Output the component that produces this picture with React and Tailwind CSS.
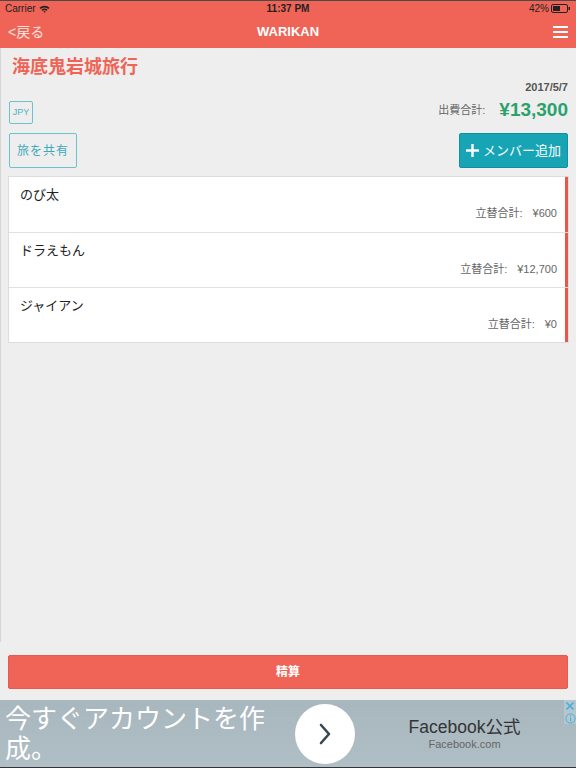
import React from "react";

const font = { fontFamily: '"Liberation Sans", "Noto Sans CJK JP", sans-serif' };

function Wifi() {
  return (
    <svg width="11" height="8" viewBox="0 0 11 8" className="ml-[3px]">
      <path d="M0.5 2.8 A7 7 0 0 1 10.5 2.8 L9.3 4 A5.3 5.3 0 0 0 1.7 4 Z" fill="#222" />
      <path d="M2.5 4.8 A4.2 4.2 0 0 1 8.5 4.8 L7.3 6 A2.5 2.5 0 0 0 3.7 6 Z" fill="#222" />
      <path d="M4.4 6.7 A1.5 1.5 0 0 1 6.6 6.7 L5.5 7.8 Z" fill="#222" />
    </svg>
  );
}

function Battery() {
  return (
    <svg width="20" height="9" viewBox="0 0 20 9" className="ml-[2px]">
      <rect x="0.5" y="0.5" width="16" height="8" rx="1.5" fill="none" stroke="#222" strokeWidth="1" />
      <rect x="2" y="2" width="7" height="5" fill="#222" />
      <rect x="17.5" y="3" width="1.5" height="3" fill="#222" />
    </svg>
  );
}

const members = [
  { name: "のび太", amount: "¥600" },
  { name: "ドラえもん", amount: "¥12,700" },
  { name: "ジャイアン", amount: "¥0" },
];

export default function App() {
  return (
    <div className="w-[576px] h-[768px] flex flex-col overflow-hidden bg-[#eeeeee]" style={font}>
      <div className="border-t border-[#4a4a4a] bg-[#ef6457]">
        <div className="h-[15px] flex items-center justify-between px-[5px] text-[10px] text-[#222]">
          <div className="flex items-center w-[100px]">
            <span>Carrier</span>
            <Wifi />
          </div>
          <span className="font-bold">11:37 PM</span>
          <div className="flex items-center justify-end w-[100px]">
            <span>42%</span>
            <Battery />
          </div>
        </div>
        <div className="h-[32px] flex items-center justify-between pl-[8px] pr-[8px] text-white">
          <span className="text-[14px] w-[100px] text-[#fde3df]">&lt;戻る</span>
          <span className="text-[13px] font-bold">WARIKAN</span>
          <div className="w-[100px] flex justify-end">
            <div className="flex flex-col gap-[3px] w-[15px]">
              <div className="h-[2px] bg-white" />
              <div className="h-[2px] bg-white" />
              <div className="h-[2px] bg-white" />
            </div>
          </div>
        </div>
      </div>

      <div className="flex-1 border-l border-[#d6d6d6] flex flex-col px-[7px]">
        <div className="pl-[4px] pt-[8px] text-[18px] font-bold text-[#ef6457] leading-[22px]">海底鬼岩城旅行</div>
        <div className="text-right text-[11px] font-bold text-[#555] mt-[2px] pr-px leading-[14px]">2017/5/7</div>
        <div className="flex items-end justify-between mt-[5px] pl-px pr-px">
          <div className="w-[24px] h-[23px] border border-[#6cc3cf] rounded-[2px] flex items-center justify-center text-[9px] text-[#4ab4c4]">JPY</div>
          <div className="flex items-center mb-[3px]">
            <span className="text-[11px] text-[#666] mr-[14px]">出費合計:</span>
            <span className="text-[19px] font-bold text-[#2aa26b] leading-[22px]">¥13,300</span>
          </div>
        </div>
        <div className="flex justify-between mt-[9px] pl-px pr-px">
          <div className="w-[68px] h-[35px] border border-[#6cc3cf] rounded-[2px] flex items-center justify-center text-[12px] text-[#3fa9b9] tracking-[1px]">旅を共有</div>
          <div className="w-[109px] h-[35px] bg-[#17a5b5] border border-[#13909e] rounded-[2px] flex items-center justify-center text-[13px] text-white">
            <svg width="13" height="13" viewBox="0 0 13 13" className="mr-[4px]">
              <rect x="5.3" y="0" width="2.4" height="13" fill="white" />
              <rect x="0" y="5.3" width="13" height="2.4" fill="white" />
            </svg>
            メンバー追加
          </div>
        </div>
        <div className="mt-[8px] border border-[#dddddd] bg-white">
          {members.map((m, i) => (
            <div
              key={m.name}
              className={`h-[55px] flex border-[#e2e2e2] ${i > 0 ? "border-t" : ""}`}
            >
              <div className="flex-1 flex flex-col pl-[11px] pr-[8px] pt-[9px]">
                <span className="text-[13px] text-[#222] leading-[18px]">{m.name}</span>
                <div className="text-right text-[11px] text-[#666] mt-[1px]">
                  立替合計:<span className="ml-[10px]">{m.amount}</span>
                </div>
              </div>
              <div className="w-[3px] bg-[#e8574b]" />
            </div>
          ))}
        </div>
      </div>

      <div className="h-[58px] px-[8px] pt-[13px]">
        <div className="h-[34px] bg-[#ef6457] border border-[#e55a4d] rounded-[2px] flex items-center justify-center text-[12px] font-bold text-white">精算</div>
      </div>

      <div className="h-[68px] bg-gradient-to-b from-[#a8b6be] to-[#b0bec5] border-b border-[#333] flex items-center relative">
        <div className="w-[290px] pl-[5px] text-[26px] leading-[30px] text-white">今すぐアカウントを作成。</div>
        <div className="w-[60px] h-[60px] rounded-full bg-white flex items-center justify-center ml-[5px]">
          <svg width="14" height="24" viewBox="0 0 14 24">
            <path d="M3 3 L11 12 L3 21" fill="none" stroke="#38474f" strokeWidth="2.6" strokeLinecap="round" strokeLinejoin="round" />
          </svg>
        </div>
        <div className="flex-1 flex flex-col items-center pr-[2px]">
          <span className="text-[17.5px] text-[#333] leading-[20px]">Facebook公式</span>
          <span className="text-[11px] text-[#666] leading-[14px]">Facebook.com</span>
        </div>
        <div className="absolute right-0 top-0 w-[12px] flex flex-col items-center bg-[#b7c6cd]">
          <svg width="10" height="10" viewBox="0 0 10 10" className="my-[1px]">
            <path d="M1.5 1.5 L8.5 8.5 M8.5 1.5 L1.5 8.5" stroke="#3fb0e0" strokeWidth="1.6" />
          </svg>
          <svg width="11" height="11" viewBox="0 0 11 11" className="mt-[1px]">
            <circle cx="5.5" cy="5.5" r="4.6" fill="none" stroke="#3fb0e0" strokeWidth="1" />
            <rect x="5" y="4.5" width="1.1" height="4" fill="#3fb0e0" />
            <rect x="5" y="2.5" width="1.1" height="1.1" fill="#3fb0e0" />
          </svg>
        </div>
      </div>
    </div>
  );
}
